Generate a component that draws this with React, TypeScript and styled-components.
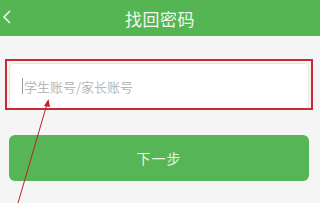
import styled, { createGlobalStyle } from "styled-components";

const GlobalStyle = createGlobalStyle`
  html, body {
    margin: 0;
    padding: 0;
    background: #f5f5f5;
    font-family: "Noto Sans CJK SC", "Noto Sans", sans-serif;
  }
`;

const Page = styled.div`
  position: relative;
  width: 320px;
  height: 203px;
  overflow: hidden;
  background: #f5f5f5;
`;

const Header = styled.div`
  height: 36px;
  background: #55b553;
  display: flex;
  align-items: center;
  justify-content: center;
  position: relative;
`;

const Back = styled.div`
  position: absolute;
  left: 1px;
  top: 9px;
  width: 12px;
  height: 18px;
  display: flex;
`;

const Title = styled.span`
  color: #f1f8ee;
  font-size: 17px;
  letter-spacing: 0.5px;
`;

const Content = styled.div`
  display: flex;
  flex-direction: column;
  padding: 27px 11px 0 9px;
  gap: 26px;
`;

const Field = styled.div`
  position: relative;
  height: 46px;
  background: #fff;
  border: 1px solid #e6e6e6;
  border-radius: 4px;
  display: flex;
  align-items: center;
  padding-left: 12px;
  box-sizing: border-box;
`;

const Highlight = styled.div`
  position: absolute;
  left: -5px;
  top: -5px;
  right: -5px;
  bottom: -2px;
  border: 2px solid #cc2a33;
`;

const Caret = styled.span`
  width: 1px;
  height: 16px;
  background: #9a9a9a;
  margin-right: 1px;
`;

const Placeholder = styled.span`
  color: #b8b8b8;
  font-size: 13px;
`;

const NextButton = styled.button`
  height: 46px;
  border: none;
  border-radius: 6px;
  background: #56b655;
  color: #eaf6e4;
  font-size: 14px;
  font-family: inherit;
  letter-spacing: 1px;
`;

const Arrow = styled.svg`
  position: absolute;
  left: 0;
  top: 0;
  pointer-events: none;
`;

export default function App() {
  return (
    <>
      <GlobalStyle />
      <Page>
        <Header>
          <Back>
            <svg width="12" height="18" viewBox="0 0 12 18">
              <path d="M9 2 L3 8 L9 14" fill="none" stroke="#f3faf0" strokeWidth="1.5" />
            </svg>
          </Back>
          <Title>找回密码</Title>
        </Header>
        <Content>
          <Field>
            <Caret />
            <Placeholder>学生账号/家长账号</Placeholder>
            <Highlight />
          </Field>
          <NextButton>下一步</NextButton>
        </Content>
        <Arrow width="320" height="203" viewBox="0 0 320 203">
          <line x1="18" y1="203" x2="47" y2="104" stroke="#b5222a" strokeWidth="1" />
          <polygon points="48.5,99 44,106 50,107" fill="#c8202a" />
        </Arrow>
      </Page>
    </>
  );
}
